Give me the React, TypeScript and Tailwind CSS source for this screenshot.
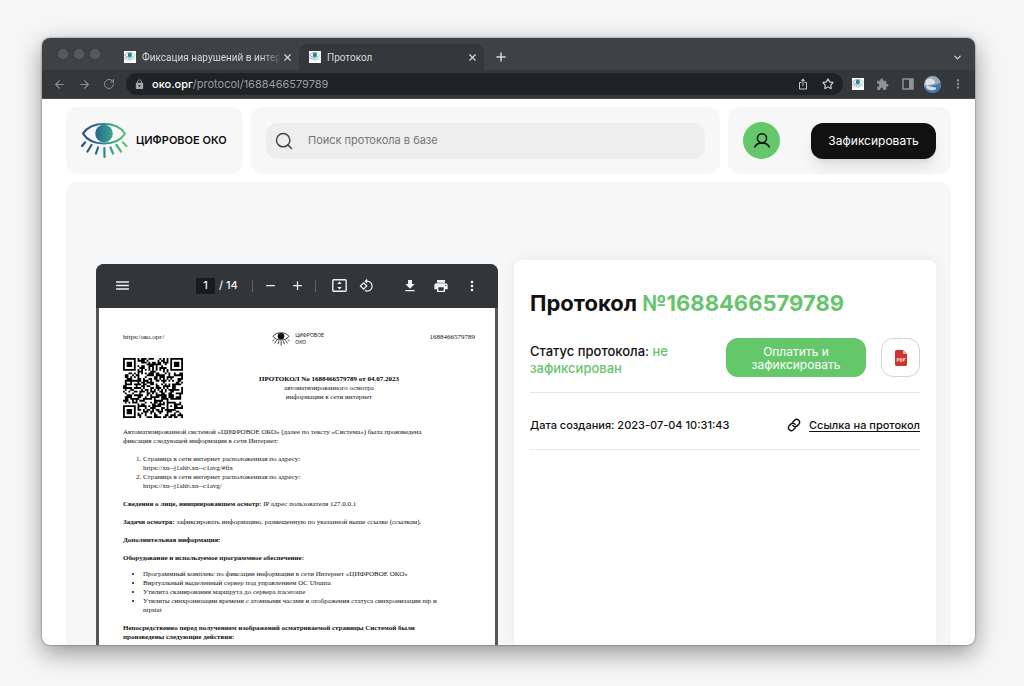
import { useState } from 'react';
import type { ReactNode } from 'react';
import { ArrowLeft, ArrowRight, ChevronDown, Plus, RotateCw, Search, Star, X } from 'lucide-react';
import {
  MdAdd,
  MdExtension,
  MdFileDownload,
  MdIosShare,
  MdLock,
  MdMenu,
  MdMoreVert,
  MdPrint,
  MdRemove,
  MdRotate90DegreesCcw,
} from 'react-icons/md';

const PROTOCOL_ID = '1688466579789';

function EyeLogo({ id, className, mono = false }: { id: string; className: string; mono?: boolean }) {
  const paint = mono ? '#111' : `url(#${id})`;
  return (
    <svg viewBox="6 6 48 38" className={className} fill="none" aria-hidden="true">
      <defs>
        <linearGradient id={id} gradientUnits="userSpaceOnUse" x1="8" y1="0" x2="52" y2="0">
          <stop offset="0" stopColor="#2b4c7e" />
          <stop offset="0.3" stopColor="#2b6488" />
          <stop offset="0.6" stopColor="#35968f" />
          <stop offset="1" stopColor="#62c96a" />
        </linearGradient>
      </defs>
      <path
        d="M9 17.5C13 11.5 21 8 30 8s17 3.500 21 9.500C47 24 39 27.500 30 27.500S13 24 9 17.500Z"
        stroke={paint}
        strokeWidth="2.200"
        strokeLinejoin="round"
      />
      <circle cx="30" cy="17.500" r="8.800" fill={paint} />
      <path
        d="M11 26.500l-3 3.500M17.500 29l-4 6.500M24 31.500l-2 6M30.400 32l.1 9M36.500 31.500l2.500 6M42.500 29l4.500 6.500M49 26.500l3.500 3.500"
        stroke={paint}
        strokeWidth="2.200"
        strokeLinecap="round"
      />
    </svg>
  );
}

function Favicon({ id }: { id: string }) {
  return (
    <span className="flex size-3 shrink-0 items-center justify-center bg-white">
      <EyeLogo id={id} className="w-3" />
    </span>
  );
}

const QR_SIZE = 33;

function buildQr() {
  const cells: boolean[][] = [];
  let seed = 16884665;
  for (let y = 0; y < QR_SIZE; y++) {
    cells.push([]);
    for (let x = 0; x < QR_SIZE; x++) {
      seed = (seed * 1103515245 + 12345) % 2147483648;
      cells[y].push(seed / 2147483648 > 0.5);
    }
  }
  for (let i = 8; i < QR_SIZE - 8; i++) {
    cells[6][i] = i % 2 === 0;
    cells[i][6] = i % 2 === 0;
  }
  const finder = (left: number, top: number, size: number) => {
    const mid = (size - 1) / 2;
    const pad = size === 7 ? 1 : 0;
    for (let y = -pad; y < size + pad; y++) {
      for (let x = -pad; x < size + pad; x++) {
        const row = cells[top + y];
        if (!row || left + x < 0 || left + x >= QR_SIZE) continue;
        const ring = Math.max(Math.abs(x - mid), Math.abs(y - mid));
        row[left + x] = ring === mid || ring <= mid - 2;
      }
    }
  };
  finder(0, 0, 7);
  finder(QR_SIZE - 7, 0, 7);
  finder(0, QR_SIZE - 7, 7);
  finder(QR_SIZE - 9, QR_SIZE - 9, 5);

  let d = '';
  cells.forEach((row, y) =>
    row.forEach((on, x) => {
      if (on) d += `M${x} ${y}h1v1h-1z`;
    })
  );
  return d;
}

const QR_PATH = buildQr();

function IconButton({ label, className = '', children }: { label: string; className?: string; children: ReactNode }) {
  return (
    <button type="button" aria-label={label} className={`flex shrink-0 items-center justify-center ${className}`}>
      {children}
    </button>
  );
}

function TabStrip() {
  return (
    <div className="flex h-8 items-end bg-[#3e4245] pl-4 font-['Roboto',sans-serif] text-[10px] text-[#d6d8da]">
      <div className="mb-[11px] flex gap-[6px]">
        <span className="size-[10px] rounded-full bg-[#575a5d]" />
        <span className="size-[10px] rounded-full bg-[#575a5d]" />
        <span className="size-[10px] rounded-full bg-[#575a5d]" />
      </div>
      <div className="ml-4 flex h-[26px] w-[183px] items-center pl-2">
        <Favicon id="tab-a" />
        <span className="ml-[6px] flex-1 whitespace-nowrap [mask-image:linear-gradient(to_right,#000_85%,transparent)]">
          Фиксация нарушений в интер
        </span>
        <IconButton label="Закрыть вкладку" className="mr-[6px]">
          <X size={11} strokeWidth={2.5} />
        </IconButton>
      </div>
      <div className="flex h-[26px] w-[185px] items-center rounded-t-lg bg-[#35383b] pr-[6px] pl-[10px]">
        <Favicon id="tab-b" />
        <span className="ml-[6px] flex-1">Протокол</span>
        <IconButton label="Закрыть вкладку">
          <X size={11} strokeWidth={2.5} />
        </IconButton>
      </div>
      <IconButton label="Новая вкладка" className="ml-[10px] h-[26px]">
        <Plus size={14} strokeWidth={2.5} />
      </IconButton>
      <IconButton label="Список вкладок" className="mr-3 ml-auto h-[26px]">
        <ChevronDown size={11} strokeWidth={2.5} />
      </IconButton>
    </div>
  );
}

function AddressBar() {
  return (
    <div className="flex h-[29px] items-center border-b border-[#4a4d50] bg-[#35383b] pr-[5px] pl-[11px] text-[#8f9295]">
      <div className="flex gap-3">
        <IconButton label="Назад">
          <ArrowLeft size={13} />
        </IconButton>
        <IconButton label="Вперёд">
          <ArrowRight size={13} />
        </IconButton>
        <IconButton label="Обновить">
          <RotateCw size={12} />
        </IconButton>
      </div>
      <div className="ml-[11px] flex h-[22px] flex-1 items-center rounded-full bg-[#202326] pr-[3px] pl-2 text-[11px]">
        <MdLock size={11} className="text-[#a5a8aa]" />
        <label htmlFor="url" className="ml-[7px] font-medium text-white">
          око.орг
        </label>
        <input
          id="url"
          readOnly
          value={`/protocol/${PROTOCOL_ID}`}
          className="min-w-0 flex-1 bg-transparent text-[#9a9da0] outline-none"
        />
        <IconButton label="Поделиться" className="w-[25px] text-[#c4c6c8]">
          <MdIosShare size={12} />
        </IconButton>
        <IconButton label="В закладки" className="w-[25px] text-[#c4c6c8]">
          <Star size={12} strokeWidth={2.5} />
        </IconButton>
      </div>
      <div className="ml-[2px] flex items-center">
        <span className="flex w-[25px] justify-center">
          <Favicon id="ext" />
        </span>
        <IconButton label="Расширения" className="w-[25px]">
          <MdExtension size={13} />
        </IconButton>
        <IconButton label="Боковая панель" className="w-[25px]">
          <svg viewBox="0 0 12 12" className="size-3" aria-hidden="true">
            <path d="M1 1h10v10H1z" fill="none" stroke="currentColor" strokeWidth="1.500" />
            <path d="M7 1h4v10H7z" fill="currentColor" />
          </svg>
        </IconButton>
        <IconButton label="Профиль" className="w-[25px]">
          <svg viewBox="0 0 18 18" className="size-[17px] rounded-full" aria-hidden="true">
            <path d="M0 0h18v18H0z" fill="#9aa9b5" />
            <path d="M0 12c5-3 9 0 18-5v11H0z" fill="#3f78ad" />
            <path d="M2 5c3-3 7-3 9 0 2 3-1 4-4 4s-5 2-6 0z" fill="#dce3e6" />
            <path d="M2 11c3-1 6 1 9 1s2 3-1 3-7 0-8-4z" fill="#d4dfe8" />
          </svg>
        </IconButton>
        <IconButton label="Меню" className="w-[25px]">
          <MdMoreVert size={14} />
        </IconButton>
      </div>
    </div>
  );
}

function SiteHeader() {
  return (
    <header className="flex gap-2">
      <a href="#" className="flex h-[67px] w-[177px] shrink-0 items-center rounded-xl bg-[#f7f7f7] pl-[14px]">
        <EyeLogo id="brand" className="w-12" />
        <span className="ml-2 text-[11px] font-semibold whitespace-nowrap text-[#111]">ЦИФРОВОЕ ОКО</span>
      </a>
      <div className="flex flex-1 items-center rounded-xl bg-[#f7f7f7] px-[15px]">
        <label className="flex h-9 w-full items-center rounded-xl bg-[#eee] pl-2">
          <Search size={20} strokeWidth={1.75} className="text-[#444]" aria-label="Поиск" />
          <input
            type="search"
            placeholder="Поиск протокола в базе"
            className="ml-[14px] flex-1 bg-transparent text-[11px] outline-none placeholder:text-[#757575]"
          />
        </label>
      </div>
      <div className="flex w-[223px] shrink-0 items-center justify-between rounded-xl bg-[#f7f7f7] px-[15px]">
        <IconButton label="Личный кабинет" className="size-[37px] rounded-full bg-[#64c76a]">
          <svg viewBox="0 0 18 18" className="size-[18px]" fill="none" stroke="#111" strokeWidth="1.600" aria-hidden="true">
            <circle cx="9" cy="6.300" r="4.600" />
            <path d="M1.500 15.500c1.500-3 4.300-4.600 7.500-4.600s6 1.600 7.500 4.600" />
          </svg>
        </IconButton>
        <button
          type="button"
          className="h-9 w-[125px] rounded-xl bg-[#111] text-[12px] text-white shadow-lg shadow-black/10"
        >
          Зафиксировать
        </button>
      </div>
    </header>
  );
}

function PdfToolbar() {
  const [page, setPage] = useState('1');
  return (
    <div className="flex h-11 items-center bg-[#323639] px-[18px] pb-px text-[#f1f1f1]">
      <IconButton label="Меню документа">
        <MdMenu size={17} />
      </IconButton>
      <div className="ml-[65px] flex items-center text-[11px] font-medium">
        <input
          aria-label="Страница"
          value={page}
          onChange={(e) => setPage(e.target.value)}
          className="h-4 w-[19px] bg-[#191b1c] text-center outline-none"
        />
        <span className="ml-1 whitespace-nowrap">/ 14</span>
        <span className="ml-[14px] h-3 w-px bg-[#5e6164]" />
        <IconButton label="Уменьшить" className="ml-[10px]">
          <MdRemove size={15} />
        </IconButton>
        <IconButton label="Увеличить" className="ml-3">
          <MdAdd size={15} />
        </IconButton>
        <span className="ml-[10px] h-3 w-px bg-[#5e6164]" />
        <IconButton label="По размеру страницы" className="ml-4">
          <svg viewBox="0 0 15 13" className="h-[13px] w-[15px]" aria-hidden="true">
            <rect x="0.800" y="0.800" width="13.400" height="11.400" rx="1" fill="none" stroke="currentColor" strokeWidth="1.400" />
            <path d="M7.500 2.500l2.200 2.600H5.300zM7.500 10.500l2.200-2.600H5.300z" fill="currentColor" />
          </svg>
        </IconButton>
        <IconButton label="Повернуть" className="ml-3">
          <MdRotate90DegreesCcw size={15} />
        </IconButton>
      </div>
      <div className="ml-auto flex gap-[15px]">
        <IconButton label="Скачать">
          <MdFileDownload size={16} />
        </IconButton>
        <IconButton label="Печать">
          <MdPrint size={16} />
        </IconButton>
        <IconButton label="Ещё">
          <MdMoreVert size={16} />
        </IconButton>
      </div>
    </div>
  );
}

const SOFTWARE = [
  'Программный комплекс по фиксации информации в сети Интернет «ЦИФРОВОЕ ОКО»',
  'Виртуальный выделенный сервер под управлением ОС Ubuntu',
  'Утилита сканирования маршрута до сервера traceroute',
  'Утилиты синхронизации времени с атомными часами и отображения статуса синхронизации ntp и ntpstat',
];

function PdfPage() {
  return (
    <article className="mx-[3px] h-[440px] bg-white pt-6 pr-5 pl-6 font-['Liberation_Serif',serif] text-[7px] leading-[9px] text-[#111]">
      <div className="grid grid-cols-3 items-start">
        <span className="pt-px">https:/око.орг/</span>
        <span className="flex gap-[5px] pl-8 font-['Inter',sans-serif] text-[5px] leading-[7px]">
          <EyeLogo id="doc" mono className="w-[18px]" />
          <span>
            ЦИФРОВОЕ
            <br />
            ОКО
          </span>
        </span>
        <span className="pt-px text-right">{PROTOCOL_ID}</span>
      </div>
      <div className="mt-3 grid grid-cols-[60px_1fr]">
        <svg viewBox="0 0 33 33" className="size-[60px]" role="img" aria-label="QR-код">
          <path d={QR_PATH} fill="#000" />
        </svg>
        <div className="self-center text-center">
          <h2 className="font-bold text-black">ПРОТОКОЛ No {PROTOCOL_ID} от 04.07.2023</h2>
          <p>автоматизированного осмотра</p>
          <p>информации в сети интернет</p>
        </div>
      </div>
      {/* right padding keeps the same line breaks as the printed form */}
      <div className="pr-4">
        <p className="mt-[10px] pr-4">
          Автоматизированной системой «ЦИФРОВОЕ ОКО» (далее по тексту «Система») была произведена фиксация следующей
          информации в сети Интернет:
        </p>
        <ol className="mt-[9px] list-decimal pl-5">
          <li>
            Страница в сети интернет расположенная по адресу:
            <br />
            https://xn--j1ahb.xn--c1avg/#fix
          </li>
          <li>
            Страница в сети интернет расположенная по адресу:
            <br />
            https://xn--j1ahb.xn--c1avg/
          </li>
        </ol>
        <p className="mt-[9px]">
          <b>Сведения о лице, инициировавшем осмотр:</b> IP адрес пользователя 127.0.0.1
        </p>
        <p className="mt-[9px]">
          <b>Задачи осмотра:</b> зафиксировать информацию, размещенную по указанной выше ссылке (ссылкам).
        </p>
        <p className="mt-[9px] font-bold">Дополнительная информация:</p>
        <p className="mt-[9px] font-bold">Оборудование и используемое программное обеспечение:</p>
        <ul className="mt-[7px] list-disc pr-2 pl-5">
          {SOFTWARE.map((item) => (
            <li key={item}>{item}</li>
          ))}
        </ul>
        <p className="mt-[9px] pr-4 font-bold">
          Непосредственно перед получением изображений осматриваемой страницы Системой были произведены следующие
          действия:
        </p>
      </div>
    </article>
  );
}

function PdfFileIcon() {
  return (
    <svg viewBox="0 0 12 16" className="h-4 w-3" aria-hidden="true">
      <path d="M1.500 0H8l4 4v10.500a1.500 1.500 0 0 1-1.500 1.500h-9A1.500 1.500 0 0 1 0 14.500v-13A1.500 1.500 0 0 1 1.500 0z" fill="#d0322d" />
      <path d="M8 0l4 4H8z" fill="#eda9a6" />
      <path
        d="M2.200 11.500v-3h1.200a.8.8 0 0 1 0 1.700H2.200M5.300 8.500v3h.6a1.400 1.500 0 0 0 0-3zM8.500 11.500v-3h1.800M8.500 10h1.400"
        fill="none"
        stroke="#fff"
        strokeWidth="0.800"
      />
    </svg>
  );
}

function ProtocolCard() {
  return (
    <section className="rounded-t-lg bg-white px-4 text-[13px] text-[#111] shadow-[0_0_16px_rgba(0,0,0,0.06)]">
      <h1 className="pt-7 text-[22px] leading-[30px] font-bold whitespace-nowrap">
        Протокол <span className="text-[#67c46d]">№{PROTOCOL_ID}</span>
      </h1>
      <div className="mt-5 flex items-center border-b border-[#e6e6e6] pb-[15px]">
        <p className="flex-1 pt-1 leading-[17px] font-medium">
          Статус протокола: <span className="text-[#67c46d]">не зафиксирован</span>
        </p>
        <button
          type="button"
          className="h-[39px] w-[140px] rounded-xl bg-[#64c76a] px-4 text-[12px] leading-[13px] text-white"
        >
          Оплатить и зафиксировать
        </button>
        <IconButton label="Скачать PDF" className="ml-[15px] size-[39px] rounded-xl border border-[#d2d2d2]">
          <PdfFileIcon />
        </IconButton>
      </div>
      <div className="flex h-[57px] items-center justify-between border-b border-[#e6e6e6] pt-2 text-[11px] font-medium whitespace-nowrap">
        <span>Дата создания: 2023-07-04 10:31:43</span>
        <a href="#" className="flex items-center gap-2">
          <svg viewBox="0 0 24 24" className="size-[14px]" fill="none" stroke="currentColor" strokeWidth="2.500" strokeLinecap="round" aria-hidden="true">
            <path d="M10 13a5 5 0 0 0 7.500.500l3-3a5 5 0 0 0-7-7l-3.500 3.500" />
            <path d="M14 11a5 5 0 0 0-7.500-.500l-3 3a5 5 0 0 0 7 7l3.500-3.500" />
          </svg>
          <span className="underline underline-offset-2">Ссылка на протокол</span>
        </a>
      </div>
    </section>
  );
}

function App() {
  return (
    <div className="h-screen bg-[#f6f6f6] pt-[38px] pr-[49px] pb-[41px] pl-[42px] font-['Inter',sans-serif]">
      <div className="flex h-full flex-col overflow-hidden rounded-lg bg-white shadow-[0_8px_24px_rgba(0,0,0,0.4),0_0_2px_rgba(0,0,0,0.6)]">
        <TabStrip />
        <AddressBar />
        <div className="flex min-h-0 flex-1 flex-col overflow-hidden px-6 pt-2">
          <SiteHeader />
          <main className="mt-2 grid min-h-0 flex-1 grid-cols-[402fr_422fr] gap-4 overflow-hidden rounded-t-xl bg-[#f7f7f7] pt-[78px] pr-[15px] pl-[30px]">
            <div className="mt-1 overflow-hidden rounded-t-lg bg-[#525659]">
              <PdfToolbar />
              <PdfPage />
            </div>
            <ProtocolCard />
          </main>
        </div>
      </div>
    </div>
  );
}

export default App;
